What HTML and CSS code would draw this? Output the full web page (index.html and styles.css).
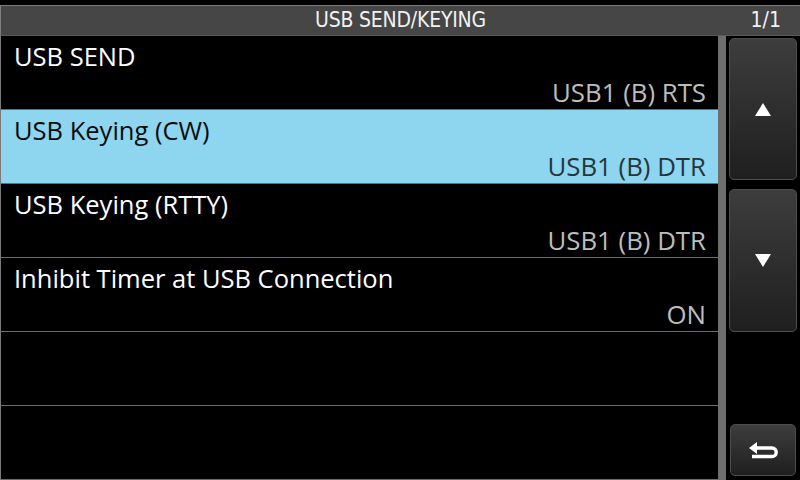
FILE: index.html
```html
<!DOCTYPE html>
<html>
<head>
<meta charset="utf-8">
<link rel="stylesheet" href="styles.css">
</head>
<body>
<div class="screen">
  <header class="titlebar">
    <span class="spacer"></span>
    <span class="title">USB SEND/KEYING</span>
    <span class="page">1/1</span>
  </header>
  <div class="main">
    <ul class="list">
      <li class="row"><span class="label">USB SEND</span><span class="value">USB1 (B) RTS</span></li>
      <li class="row selected"><span class="label">USB Keying (CW)</span><span class="value">USB1 (B) DTR</span></li>
      <li class="row"><span class="label">USB Keying (RTTY)</span><span class="value">USB1 (B) DTR</span></li>
      <li class="row"><span class="label">Inhibit Timer at USB Connection</span><span class="value">ON</span></li>
      <li class="row"><span class="label"></span><span class="value"></span></li>
      <li class="row"><span class="label"></span><span class="value"></span></li>
    </ul>
    <div class="scrollbar"></div>
    <div class="side">
      <button class="btn btn-up" aria-label="Up">
        <svg width="16" height="13" viewBox="0 0 16 13"><polygon points="8,0 16,13 0,13" fill="#fff"/></svg>
      </button>
      <button class="btn btn-down" aria-label="Down">
        <svg width="16" height="13" viewBox="0 0 16 13"><polygon points="0,0 16,0 8,13" fill="#fff"/></svg>
      </button>
      <div class="side-fill"></div>
      <button class="btn btn-back" aria-label="Back">
        <svg width="29" height="17" viewBox="0 0 29 17"><polygon points="0,6 8,0 8,12" fill="#fff"/><path d="M7 6 H23 A4.25 4.25 0 0 1 23 14.5 H3" fill="none" stroke="#fff" stroke-width="3.4"/></svg>
      </button>
    </div>
  </div>
</div>
</body>
</html>
```
FILE: styles.css
```css
* { box-sizing: border-box; }
html, body { margin: 0; padding: 0; background: #000; }
body { width: 800px; height: 480px; overflow: hidden; font-family: "Open Sans", "Noto Sans", sans-serif; }
.screen { width: 800px; height: 480px; padding-top: 5px; display: flex; flex-direction: column; }
.titlebar {
  height: 31px;
  background: #464646;
  border-top: 1px solid #7c7c7c;
  border-left: 1px solid #7c7c7c;
  border-bottom: 1px solid #5a5a5a;
  display: grid;
  grid-template-columns: 1fr auto 1fr;
  align-items: center;
  color: #f2f2f2;
  font-family: "DejaVu Sans Condensed", "DejaVu Sans", sans-serif;
  font-stretch: condensed;
  font-size: 21px;
  line-height: 29px;
}
.title { text-align: center; letter-spacing: -0.2px; }
.page { text-align: right; padding-right: 19px; }
.main { flex: 1; display: grid; grid-template-columns: 718px 8px 74px; min-height: 0; }
.list { list-style: none; margin: 0; padding: 0; border-left: 1px solid #7a7a7a; display: flex; flex-direction: column; }
.row {
  height: 74px;
  border-bottom: 1px solid #6c6c6c;
  display: flex;
  flex-direction: column;
  justify-content: space-between;
  padding: 5px 12px 2px 13px;
}
.label { color: #fff; font-size: 25.5px; line-height: 30px; height: 30px; white-space: nowrap; }
.value { color: #bdbdbd; font-size: 25.8px; line-height: 30px; height: 30px; text-align: right; white-space: nowrap; }
.row.selected { background: #8ed6ef; }
.row.selected .label { color: #0c0c0c; }
.row.selected .value { color: #25353d; }
.scrollbar { background: #6d6f6d; }
.side { display: flex; flex-direction: column; padding: 2px 3px 4px 3px; }
.btn {
  display: flex; align-items: center; justify-content: center;
  border: 1px solid #4d4d4d;
  border-radius: 5px;
  background: linear-gradient(#3d3d3d, #1f1f1f);
  padding: 0;
}
.btn-up { height: 142px; }
.btn-down { height: 143px; margin-top: 9px; }
.side-fill { flex: 1; }
.btn-back { height: 52px; margin: 0 1px; }
```
